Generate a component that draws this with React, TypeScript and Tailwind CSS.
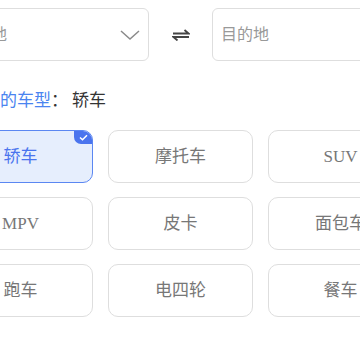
import { useState } from "react";

const types = ["轿车", "摩托车", "SUV", "MPV", "皮卡", "面包车", "跑车", "电四轮", "餐车"];

export default function App() {
  const [selected, setSelected] = useState("轿车");

  return (
    <div className="w-[360px] h-[360px] overflow-hidden bg-white font-['Liberation_Serif','Noto_Sans_CJK_SC',serif]">
      <div className="ml-[-52px] w-[465px] pt-2">
        {/* 出发地 / 目的地 */}
        <div className="flex items-center">
          <div className="w-[201px] h-[53px] flex items-center justify-between pl-[10px] pr-[7px] border-[1.5px] border-[#dedede] rounded-md">
            <span className="text-base text-[#999]">出发地</span>
            <svg width="22" height="12" viewBox="0 0 22 12" fill="none">
              <path d="M2 2 L11 10 L20 2" stroke="#8a8a8a" strokeWidth="1.5" />
            </svg>
          </div>
          <div className="w-[63px] flex justify-center">
            <svg width="18" height="12" viewBox="0 0 18 12" fill="none">
              <path d="M1 4.5 H16.5 L12.5 1" stroke="#444" strokeWidth="1.8" />
              <path d="M17 8 H1.5 L5.5 11.5" stroke="#444" strokeWidth="1.8" />
            </svg>
          </div>
          <div className="w-[201px] h-[53px] flex items-center pl-[8px] border-[1.5px] border-[#dedede] rounded-md">
            <span className="text-base text-[#999]">目的地</span>
          </div>
        </div>

        {/* 已选车型 */}
        <div className="mt-[30px] pl-[1px] text-[17px] leading-5">
          <span className="text-[#4a84f0]">您选择的车型</span>
          <span className="text-[#333]">：</span>
          <span className="text-[#333] ml-1">{selected}</span>
        </div>

        {/* 车型列表 */}
        <div className="mt-[19px] grid grid-cols-3 gap-x-[15px] gap-y-[14px]">
          {types.map((t) => {
            const on = t === selected;
            return (
              <button
                key={t}
                onClick={() => setSelected(t)}
                className={
                  on
                    ? "relative h-[53px] rounded-[10px] border-[1.5px] border-[#5b87f2] bg-[#e6eefd] text-[17px] text-[#4a74ee] overflow-hidden"
                    : "relative h-[53px] rounded-[10px] border-[1.5px] border-[#dedede] bg-white text-[17px] text-[#777]"
                }
              >
                {t}
                {on && (
                  <span className="absolute top-0 right-0 w-[18px] h-[13px] bg-[#4a74ee] rounded-bl-[7px] flex items-center justify-center">
                    <svg width="9" height="7" viewBox="0 0 9 7" fill="none">
                      <path d="M1 3.5 L3.5 5.8 L8 1.2" stroke="white" strokeWidth="1.5" />
                    </svg>
                  </span>
                )}
              </button>
            );
          })}
        </div>
      </div>
    </div>
  );
}
